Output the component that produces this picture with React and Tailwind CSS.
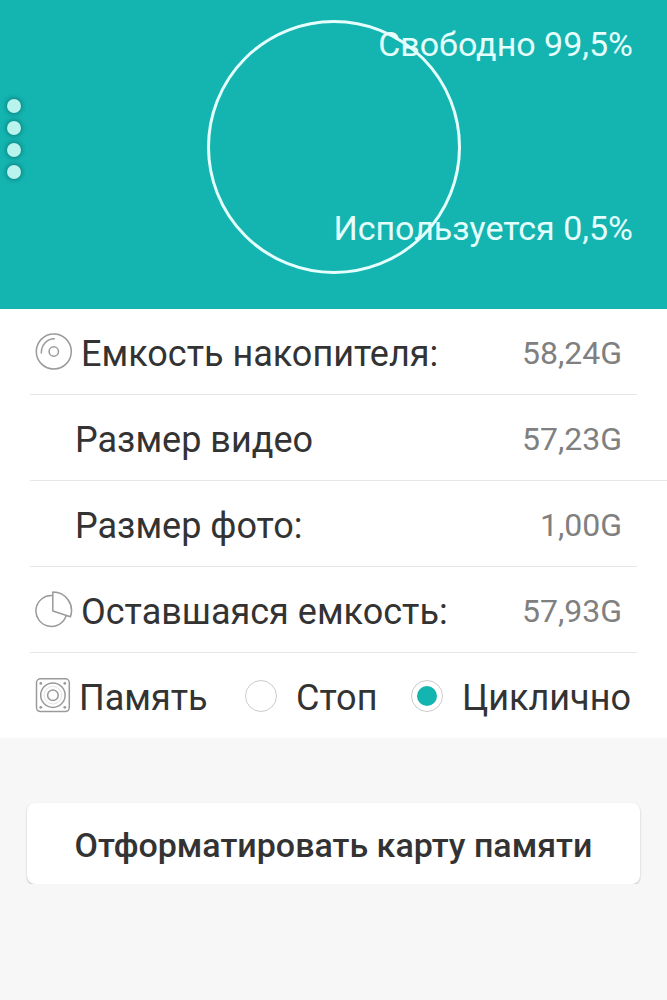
import { useState } from 'react'

const stats = [
  { label: 'Емкость накопителя:', value: '58,24G', icon: DiscIcon, line: 'mr-[30px]' },
  { label: 'Размер видео', value: '57,23G', line: '' },
  { label: 'Размер фото:', value: '1,00G', line: 'mr-[30px]' },
  { label: 'Оставшаяся емкость:', value: '57,93G', icon: PieIcon, line: 'mr-[30px]' },
]

const modes = [
  { id: 'stop', label: 'Стоп' },
  { id: 'loop', label: 'Циклично' },
]

function DiscIcon() {
  return (
    <svg viewBox="0 0 38 38" className="size-[38px] shrink-0" fill="none" stroke="#9a9a9a" strokeWidth="1.5" aria-hidden="true">
      <circle cx="18.8" cy="18.5" r="17.5" />
      <circle cx="18.8" cy="18.5" r="4.7" />
      <path d="M6.3 20C6.3 12 11.8 6 19.3 5.8" strokeLinecap="round" />
    </svg>
  )
}

function PieIcon() {
  return (
    <svg viewBox="0 0 38 38" className="size-[38px] shrink-0" fill="none" stroke="#9a9a9a" strokeWidth="1.5" strokeLinejoin="round" aria-hidden="true">
      <path d="M17.8 4.5A15.5 15.5 0 1 0 31.3 24.3" />
      <path d="M17.8 1V20L35.4 25.7A18.5 18.5 0 0 0 17.8 1Z" />
    </svg>
  )
}

function MemoryIcon() {
  return (
    <svg viewBox="0 0 38 38" className="size-[38px] shrink-0" fill="none" stroke="#9a9a9a" strokeWidth="1.5" aria-hidden="true">
      <rect x="1.5" y="1.8" width="32.8" height="32.8" rx="4" />
      <circle cx="17.9" cy="18.2" r="12.2" />
      <circle cx="17.9" cy="18.2" r="5.3" />
      <circle cx="17.9" cy="18.2" r="8.8" strokeWidth="0.7" opacity="0.4" />
      <g fill="#9a9a9a" stroke="none">
        <circle cx="5.8" cy="6.4" r="1.4" />
        <circle cx="29.8" cy="6.4" r="1.4" />
        <circle cx="5.8" cy="30.3" r="1.4" />
        <circle cx="29.8" cy="30.3" r="1.4" />
      </g>
    </svg>
  )
}

function StatRow({ label, value, icon: Icon, line }) {
  return (
    <div className={`flex h-[86px] items-center border-b border-[#e6e6e6] ${line}`}>
      <dt className={`flex flex-1 items-center gap-2 text-4xl ${Icon ? 'pl-[5px]' : 'pl-[45px]'}`}>
        {Icon && <Icon />}
        <span className="pt-1">{label}</span>
      </dt>
      <dd className={`pt-0.5 text-[32px] text-[#808080] ${line ? 'pr-[15px]' : 'pr-[45px]'}`}>{value}</dd>
    </div>
  )
}

export default function App() {
  const [mode, setMode] = useState('loop')

  return (
    <main className="min-h-screen bg-[#f7f7f7] font-[Roboto,sans-serif] text-[#333]">
      <section className="relative flex h-[309px] items-start justify-center bg-[#14b4b0] pt-5 text-[#e4fffd]">
        <div className="size-[254px] rounded-full border-[3px] border-current" />
        <div className="absolute inset-y-0 right-[34px] flex flex-col gap-36 pt-6 text-right text-[34px] leading-10">
          <p>Свободно 99,5%</p>
          <p>Используется 0,5%</p>
        </div>
        <button type="button" aria-label="Меню" className="absolute top-[99px] left-[7px] flex flex-col gap-2">
          {[0, 1, 2, 3].map(i => (
            <span key={i} className="size-3.5 rounded-full bg-[#b9f3ee] shadow-[0_0_4px_1px_#0b7f7c]" />
          ))}
        </button>
      </section>

      <section className="bg-white">
        <dl className="pl-[30px]">
          {stats.map(s => <StatRow key={s.label} {...s} />)}
        </dl>

        <fieldset className="flex h-[85px] items-center justify-between pr-9 pl-[35px] text-4xl" aria-labelledby="memory">
          <div className="mr-1 flex items-center gap-1.5">
            <MemoryIcon />
            <span id="memory" className="pt-1">Память</span>
          </div>
          {modes.map(m => (
            <label key={m.id} className="flex items-center gap-[19px]">
              <input
                type="radio"
                name="mode"
                value={m.id}
                checked={mode === m.id}
                onChange={() => setMode(m.id)}
                className="size-8 appearance-none rounded-full border border-[#ccc] bg-white bg-clip-content p-[5px] checked:bg-[#14b4b0]"
              />
              <span className="pt-1">{m.label}</span>
            </label>
          ))}
        </fieldset>
      </section>

      <div className="mt-16 overflow-hidden px-[27px] pt-px">
        <button
          type="button"
          className="h-[81px] w-full rounded-lg bg-white pt-1 text-[34px] font-medium shadow-[0_1px_2px_#00000040]"
        >
          Отформатировать карту памяти
        </button>
      </div>
    </main>
  )
}
